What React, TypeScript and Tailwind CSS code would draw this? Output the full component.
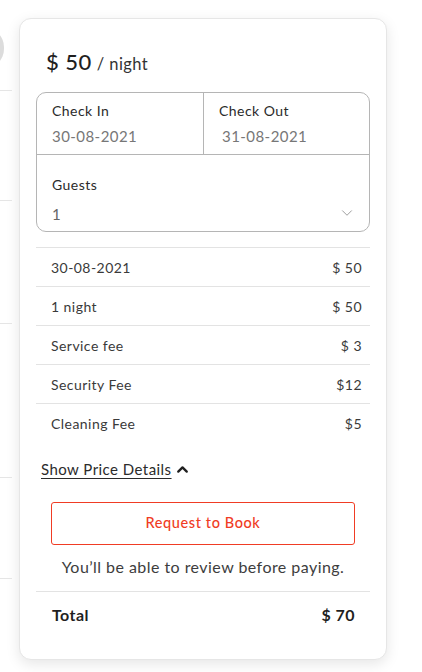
import { ChevronDown, ChevronUp } from "lucide-react";

const fees = [
  { label: "30-08-2021", amount: "$ 50" },
  { label: "1 night", amount: "$ 50" },
  { label: "Service fee", amount: "$ 3" },
  { label: "Security Fee", amount: "$12" },
  { label: "Cleaning Fee", amount: "$5" }
];

// Faixa cortada do conteúdo ao lado do card
function SideStrip() {
  return (
    <div className="relative w-[19px] shrink-0">
      <div className="absolute left-[-34px] top-[10px] h-[40px] w-[38px] rounded-full bg-[#dcdcdc]" />
      <div className="absolute left-0 top-[72px] h-px w-[12px] bg-[#e5e5e5]" />
      <div className="absolute left-0 top-[182px] h-px w-[12px] bg-[#e5e5e5]" />
      <div className="absolute left-0 top-[305px] h-px w-[12px] bg-[#e5e5e5]" />
      <div className="absolute left-0 top-[459px] h-px w-[12px] bg-[#e5e5e5]" />
      <div className="absolute left-0 top-[560px] h-px w-[12px] bg-[#e5e5e5]" />
    </div>
  );
}

export default function App() {
  return (
    <main
      className="flex min-h-[672px] bg-white pt-[18px] tracking-[0.45px] text-[#2b2b2b]"
      style={{ fontFamily: "Lato, 'Noto Sans', sans-serif" }}
    >
      <SideStrip />

      <section className="h-[642px] w-[368px] rounded-[12px] border border-[#e6e6e6] bg-white px-[16px] pt-[28px] shadow-[0_4px_14px_rgba(0,0,0,0.10)]">
        <div className="flex h-[30px] items-baseline pl-[10px] leading-[30px]">
          <span className="text-[22px] font-medium text-[#1f1f1f]">$ 50</span>
          <span className="ml-[5px] text-[16.5px] text-[#333]">/ night</span>
        </div>

        <div className="mt-[15px] rounded-[10px] border border-[#b5b5b5]">
          <div className="flex h-[62px] border-b border-[#b5b5b5]">
            <div className="flex w-[167px] flex-col justify-center border-r border-[#b5b5b5] pl-[15px]">
              <p className="text-[14px] leading-[20px] text-[#2b2b2b]">Check In</p>
              <p className="mt-[5px] text-[15px] leading-[20px] text-[#777]">30-08-2021</p>
            </div>
            <div className="flex flex-1 flex-col justify-center pl-[15px]">
              <p className="text-[14px] leading-[20px] text-[#2b2b2b]">Check Out</p>
              <p className="mt-[5px] pl-[3px] text-[15px] leading-[20px] text-[#777]">31-08-2021</p>
            </div>
          </div>
          <div className="h-[76px] pl-[15px] pr-[13px] pt-[20px]">
            <p className="text-[14px] leading-[20px] text-[#2b2b2b]">Guests</p>
            <div className="mt-[9px] flex items-center justify-between">
              <span className="text-[15px] leading-[20px] text-[#666]">1</span>
              <ChevronDown size={18} strokeWidth={1.1} className="-mt-[3px] text-[#888]" />
            </div>
          </div>
        </div>

        <div className="mt-[15px]">
          {fees.map((fee, i) => (
            <div
              className="flex h-[39px] items-center justify-between border-t border-[#e3e3e3] pl-[15px] pr-[8px] text-[14px] text-[#3a3a3a]"
              key={i}
            >
              <span>{fee.label}</span>
              <span>{fee.amount}</span>
            </div>
          ))}
        </div>

        <button className="mt-[16px] flex items-center pl-[5px] text-[15px] text-[#2b2b2b]">
          <span className="underline underline-offset-[3px]">Show Price Details </span>
          <ChevronUp size={17} strokeWidth={3.25} className="ml-[2px] text-[#1f1f1f]" />
        </button>

        <button className="mx-[15px] mt-[21px] h-[43px] w-[304px] rounded-[3px] border border-[#f03c24] text-[14.5px] font-medium tracking-[0.6px] text-[#f03c24]">
          Request to Book
        </button>

        <p className="mt-[10px] text-center text-[16px] text-[#3d3d3d]">
          You’ll be able to review before paying.
        </p>

        <div className="mt-[12px] flex h-[48px] items-center justify-between border-t border-[#e3e3e3] pl-[16px] pr-[15px] text-[16px] font-bold text-[#1f1f1f]">
          <span>Total</span>
          <span>$ 70</span>
        </div>
      </section>
    </main>
  );
}
